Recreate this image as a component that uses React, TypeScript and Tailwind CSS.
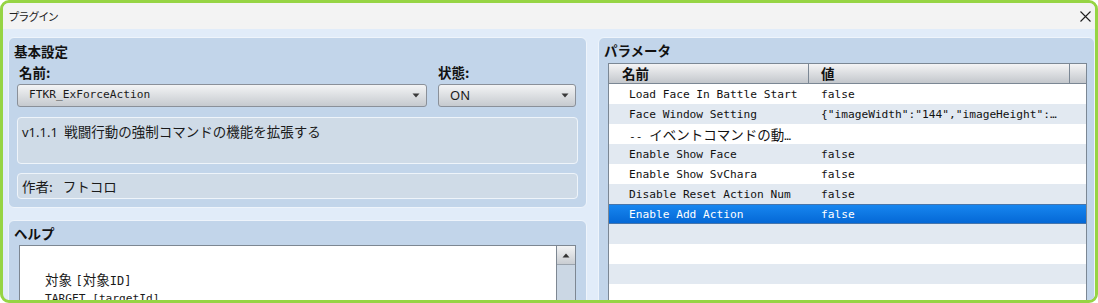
import { FC, ReactNode } from "react";

const ui = "font-['Noto_Sans','Noto_Sans_CJK_JP',sans-serif]";
const jp = "font-['Noto_Sans_CJK_JP','Noto_Sans',sans-serif]";
const mono = "font-['DejaVu_Sans_Mono','Noto_Sans_CJK_JP',monospace]";

const Arrow: FC = () => (
  <svg width="8" height="5" viewBox="0 0 8 5" className="shrink-0">
    <path d="M0.5 0.5 L7.5 0.5 L4 4.5 Z" fill="#3a3a3a" />
  </svg>
);

const Select: FC<{ width: string; children: ReactNode }> = ({ width, children }) => (
  <div
    className={`${width} h-[23px] flex items-center justify-between pl-[11px] pr-[6px] rounded-[3px] border border-[#8a9099]
      bg-gradient-to-b from-[#f3f4f5] to-[#c6cacf] text-[#1a1a1a]`}
  >
    {children}
    <Arrow />
  </div>
);

type Row = { name: ReactNode; value: string; selected?: boolean };

const rows: Row[] = [
  { name: "Load Face In Battle Start", value: "false" },
  { name: "Face Window Setting", value: '{"imageWidth":"144","imageHeight":…' },
  {
    name: (
      <>
        -- <span className={`${jp} text-[13.5px]`}>イベントコマンドの動</span>…
      </>
    ),
    value: "",
  },
  { name: "Enable Show Face", value: "false" },
  { name: "Enable Show SvChara", value: "false" },
  { name: "Disable Reset Action Num", value: "false" },
  { name: "Enable Add Action", value: "false", selected: true },
  { name: "", value: "" },
  { name: "", value: "" },
  { name: "", value: "" },
  { name: "", value: "" },
];

const App: FC = () => {
  return (
    <div
      className={`${ui} w-[1098px] h-[303px] flex flex-col overflow-hidden rounded-[9px] border-[3px] border-[#96d444] bg-[#e1ecf9]`}
    >
      {/* title bar */}
      <div className="h-[26px] shrink-0 flex items-center justify-between pl-[6px] pr-[4px] bg-[#f3f3f3]">
        <span className={`${jp} text-[11px] text-[#222] [font-feature-settings:'palt']`}>プラグイン</span>
        <svg width="11" height="11" viewBox="0 0 11 11">
          <path d="M0.5 0.5 L10.5 10.5 M10.5 0.5 L0.5 10.5" stroke="#1e1e1e" strokeWidth="1.1" />
        </svg>
      </div>

      <div className="flex-1 flex gap-[11px] pl-[5px] pt-[8px] overflow-hidden">
        {/* left column */}
        <div className="w-[579px] shrink-0 flex flex-col gap-[12px]">
          <div className="h-[171px] shrink-0 rounded-[6px] border border-[#eef4fb] bg-[#c2d5ea] px-[8px] pt-[5px]">
            <div className={`${jp} h-[16px] leading-[16px] -ml-[3px] text-[13.5px] font-bold text-[#111]`}>基本設定</div>
            <div className="flex gap-[11px] mt-[5px]">
              <div className="flex flex-col">
                <div className={`${jp} h-[16px] leading-[16px] pl-[2px] text-[13.5px] font-bold text-[#111]`}>名前:</div>
                <div className="mt-[4px]">
                  <Select width="w-[410px]">
                    <span className={`${mono} text-[11.2px]`}>FTKR_ExForceAction</span>
                  </Select>
                </div>
              </div>
              <div className="flex flex-col">
                <div className={`${jp} h-[16px] leading-[16px] text-[13.5px] font-bold text-[#111]`}>状態:</div>
                <div className="mt-[4px]">
                  <Select width="w-[138px]">
                    <span className="text-[13px]">ON</span>
                  </Select>
                </div>
              </div>
            </div>
            <div className="mt-[10px] h-[47px] rounded-[4px] border border-[#eef4fa] bg-[#cfdbe7] pl-[4px] pt-[3px] text-[13px] text-[#1a1a1a]">
              v1.1.1 <span className={`${jp} text-[13.5px] ml-[3px]`}>戦闘行動の強制コマンドの機能を拡張する</span>
            </div>
            <div
              className={`${jp} mt-[9px] h-[26px] flex items-center rounded-[4px] border border-[#eef4fa] bg-[#cfdbe7] pl-[4px] text-[13.5px] text-[#1a1a1a]`}
            >
              作者:<span className="ml-[10px]">フトコロ</span>
            </div>
          </div>

          <div className="h-[140px] shrink-0 rounded-[6px] border border-[#eef4fb] bg-[#c2d5ea] pt-[4px]">
            <div className={`${jp} h-[16px] leading-[16px] pl-[5px] text-[13.5px] font-bold text-[#111]`}>ヘルプ</div>
            <div className="mt-[4px] mx-[10px] h-[110px] flex border border-[#7d8792] bg-white">
              <div className="flex-1 pl-[25px] pt-[6px] text-[13.5px] leading-[18px] text-[#1a1a1a]">
                <div className="h-[18px]" />
                <div>
                  <span className={jp}>対象</span> <span className={mono + " text-[12px]"}>[</span>
                  <span className={jp}>対象</span>
                  <span className={mono + " text-[12px]"}>ID]</span>
                </div>
                <div className={`${mono} text-[11.2px]`}>TARGET [targetId]</div>
              </div>
              <div className="w-[19px] border-l border-[#7d8792] bg-[#cbd7e4]">
                <div className="h-[19px] flex items-center justify-center border-b border-[#9aa3ad] bg-gradient-to-b from-[#f2f3f4] to-[#c9cdd2]">
                  <svg width="8" height="5" viewBox="0 0 8 5">
                    <path d="M0.5 4.5 L7.5 4.5 L4 0.5 Z" fill="#333" />
                  </svg>
                </div>
              </div>
            </div>
          </div>
        </div>

        {/* right panel */}
        <div className="flex-1 h-[300px] shrink-0 rounded-[6px] border border-[#eef4fb] bg-[#c2d5ea] pt-[4px]">
          <div className={`${jp} h-[17px] leading-[17px] pl-[5px] text-[13.5px] font-bold text-[#111]`}>パラメータ</div>
          <div className="mt-[4px] ml-[9px] w-[479px] h-[260px] border border-[#7b8794] bg-white overflow-hidden">
            <div className="h-[20px] flex border-b border-[#7b8794] bg-gradient-to-b from-[#f4f4f5] to-[#c3c7cc]">
              <div className={`${jp} w-[200px] border-r border-[#7b8794] pl-[13px] text-[13.5px] leading-[19px] font-bold text-[#111]`}>名前</div>
              <div className={`${jp} w-[261px] border-r border-[#7b8794] pl-[12px] text-[13.5px] leading-[19px] font-bold text-[#111]`}>値</div>
              <div className="flex-1" />
            </div>
            {rows.map((r, i) => (
              <div
                key={i}
                className={`h-[20px] flex items-center pt-[2px] ${mono} text-[11.2px] whitespace-nowrap ${
                  r.selected
                    ? "bg-gradient-to-b from-[#1786ef] to-[#0568d6] border-y border-[#4675ab] text-white"
                    : i % 2 === 0
                    ? "bg-white text-[#111]"
                    : "bg-[#e2e9f1] text-[#111]"
                }`}
              >
                <div className="w-[200px] pl-[20px] overflow-hidden">{r.name}</div>
                <div className="w-[258px] pl-[12px] overflow-hidden">{r.value}</div>
              </div>
            ))}
          </div>
        </div>
      </div>
    </div>
  );
};

export default App;
